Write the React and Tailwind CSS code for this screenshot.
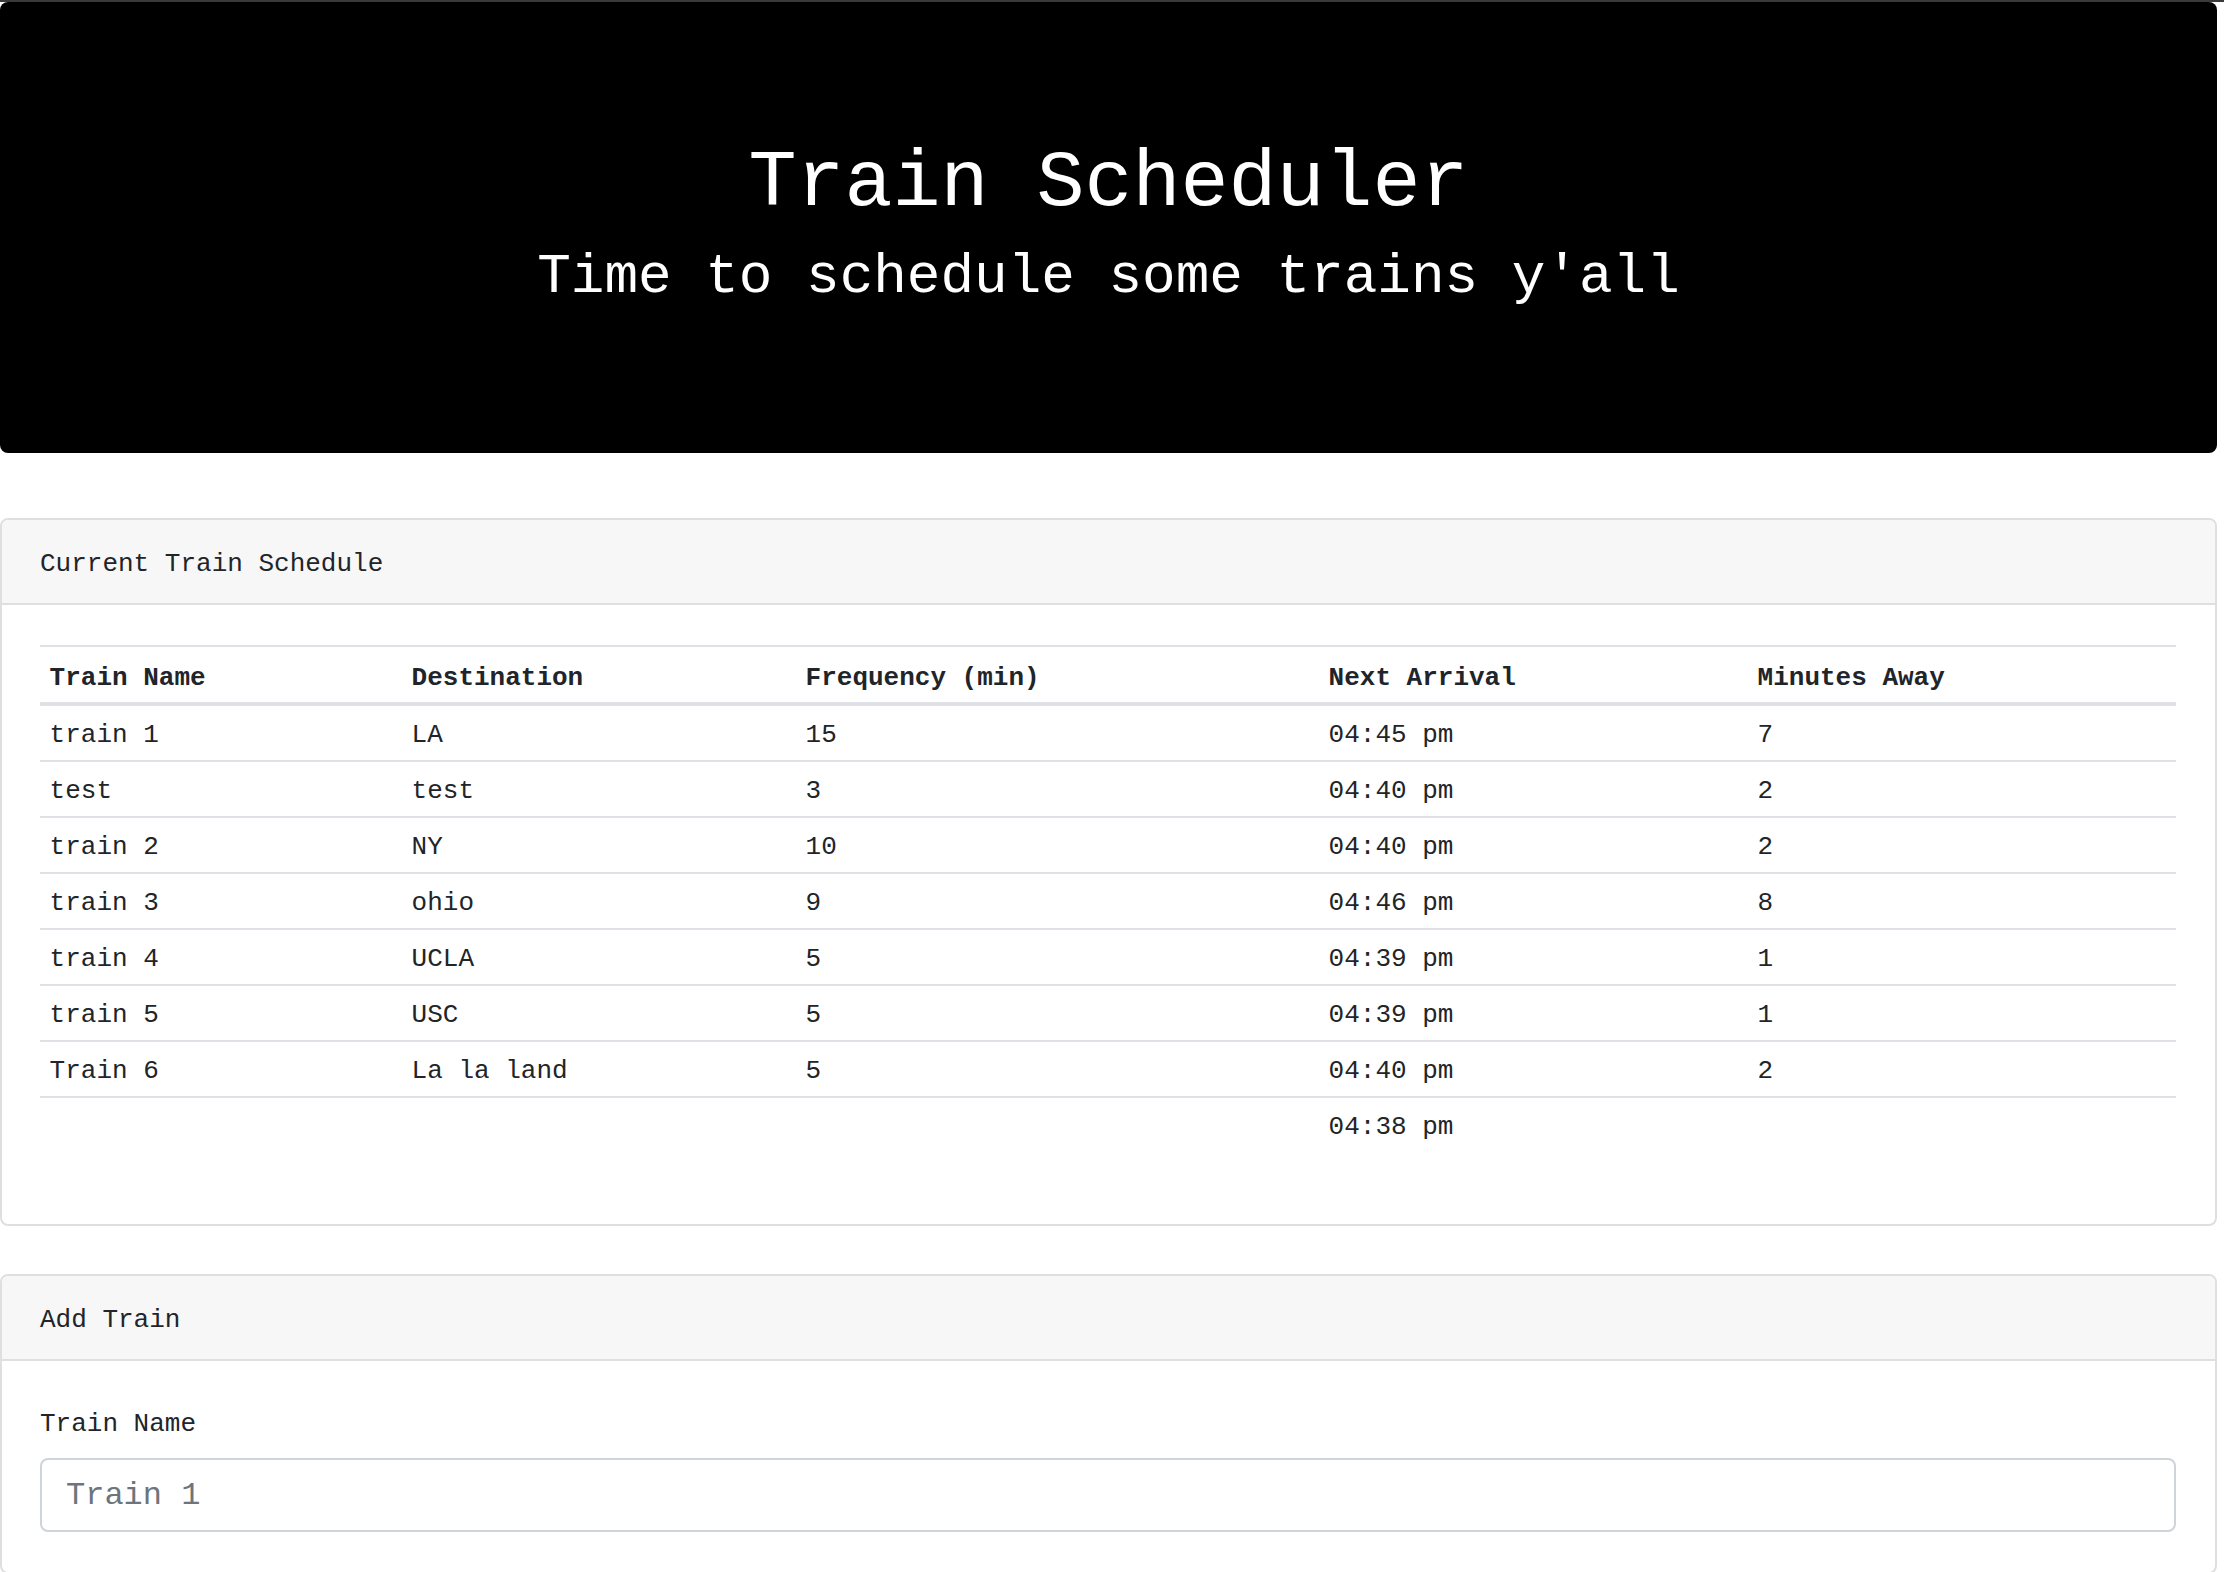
const trains = [
  { name: 'train 1', dest: 'LA', freq: '15', next: '04:45 pm', away: '7' },
  { name: 'test', dest: 'test', freq: '3', next: '04:40 pm', away: '2' },
  { name: 'train 2', dest: 'NY', freq: '10', next: '04:40 pm', away: '2' },
  { name: 'train 3', dest: 'ohio', freq: '9', next: '04:46 pm', away: '8' },
  { name: 'train 4', dest: 'UCLA', freq: '5', next: '04:39 pm', away: '1' },
  { name: 'train 5', dest: 'USC', freq: '5', next: '04:39 pm', away: '1' },
  { name: 'Train 6', dest: 'La la land', freq: '5', next: '04:40 pm', away: '2' },
  { name: '', dest: '', freq: '', next: '04:38 pm', away: '' }
];

const columns = [
  { label: 'Train Name', key: 'name', width: 'w-[362px]' },
  { label: 'Destination', key: 'dest', width: 'w-[394px]' },
  { label: 'Frequency (min)', key: 'freq', width: 'w-[523px]' },
  { label: 'Next Arrival', key: 'next', width: 'w-[429px]' },
  { label: 'Minutes Away', key: 'away', width: 'w-[428px]' }
];

const Card = ({ title, children }) => (
  <div className="border-2 border-[#dfdfdf] rounded-[8px] bg-white overflow-hidden">
    <div className="bg-[#f7f7f7] border-b-2 border-[#dfdfdf] px-[38px] pt-[25px] pb-[19px] text-[26px] leading-[39px]">
      {title}
    </div>
    <div className="px-[38px] pt-[40px] pb-[40px]">{children}</div>
  </div>
);

export default function App() {
  return (
    <div className="min-h-screen bg-white text-[#212529] font-['Liberation_Mono','Courier_New',monospace]">
      <div className="h-[2px] w-full bg-[#3a3a3a]" />
      <div className="w-[2217px]">
        {/* Jumbotron */}
        <div className="bg-black rounded-[8px] text-white text-center pt-[134px] pb-[142px]">
          <h1 className="text-[80px] leading-[96px] mb-[12px]">Train Scheduler</h1>
          <h3 className="text-[56px] leading-[67px]">Time to schedule some trains y'all</h3>
        </div>

        <div className="mt-[65px] flex flex-col gap-[48px]">
          <Card title="Current Train Schedule">
            <table className="w-[2136px] table-fixed border-collapse text-[26px] leading-[39px] mb-[32px]">
              <thead>
                <tr className="border-t-2 border-b-4 border-[#dee2e6]">
                  {columns.map((c) => (
                    <th key={c.key} className={`${c.width} text-left font-bold px-[9.6px] pt-[12px] pb-[4px]`}>
                      {c.label}
                    </th>
                  ))}
                </tr>
              </thead>
              <tbody>
                {trains.map((t, i) => (
                  <tr key={i} className="border-t-2 border-[#dee2e6] first:border-t-0">
                    {columns.map((c) => (
                      <td key={c.key} className="px-[9.6px] pt-[10px] pb-[5px]">
                        {t[c.key]}
                      </td>
                    ))}
                  </tr>
                ))}
              </tbody>
            </table>
          </Card>

          <Card title="Add Train">
            <label className="block text-[26px] leading-[39px] pt-[4px] mb-[14px]">Train Name</label>
            <input
              type="text"
              placeholder="Train 1"
              className="block w-[2136px] h-[74px] border-2 border-[#ced4da] rounded-[8px] px-[24px] text-[32px] placeholder:text-[#6c757d] outline-none"
            />
          </Card>
        </div>
      </div>
    </div>
  );
}
